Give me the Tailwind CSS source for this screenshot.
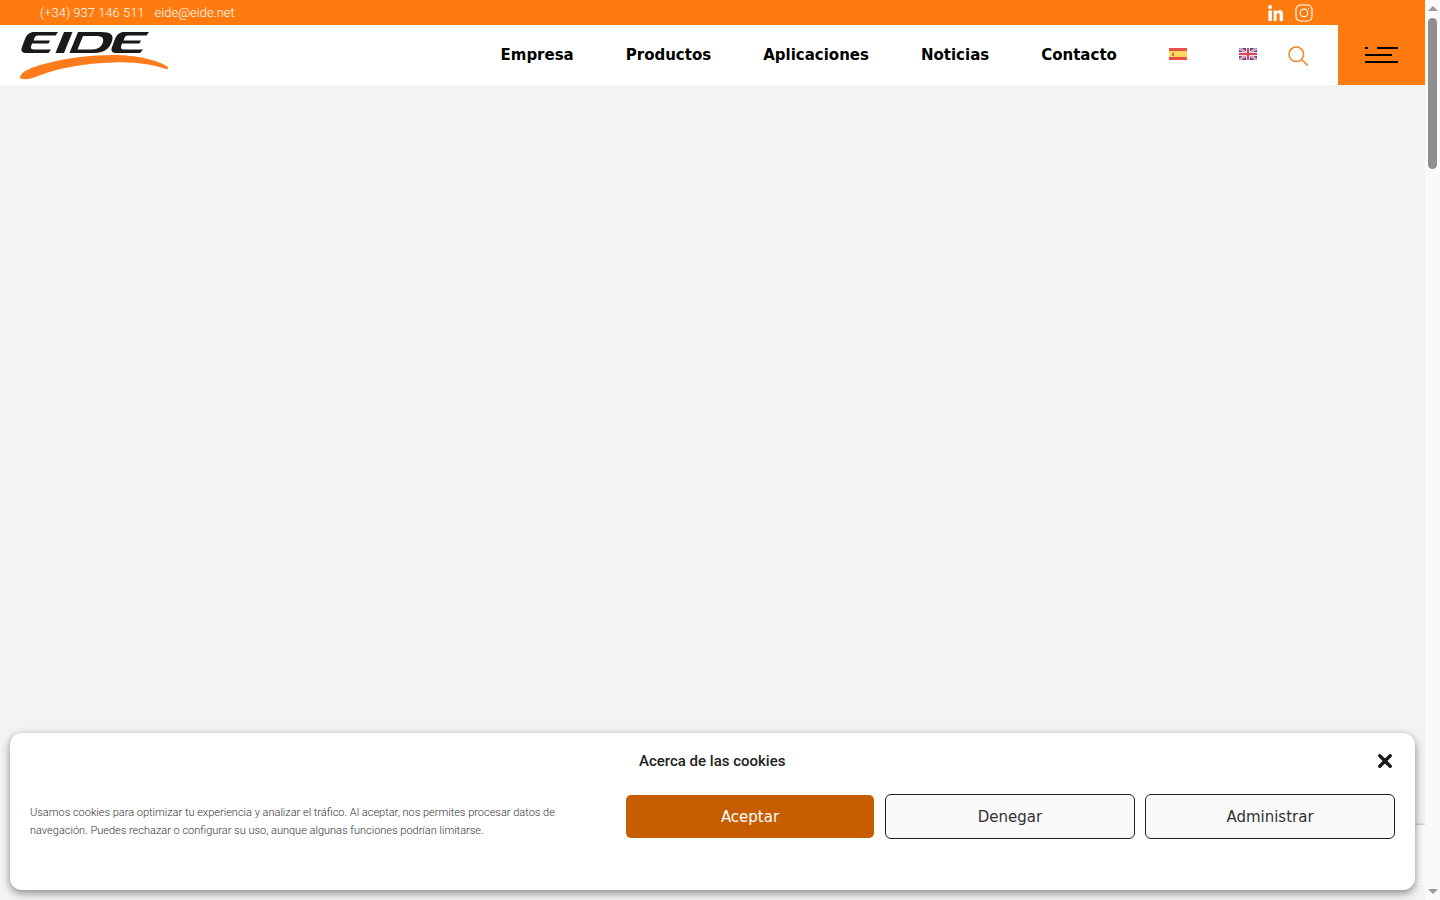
<!DOCTYPE html>
<html lang="es">
<head>
  <meta charset="UTF-8" />
  <meta name="viewport" content="width=device-width, initial-scale=1.0"/>
  <title>EIDE</title>
  <script src="https://cdn.jsdelivr.net/npm/@tailwindcss/browser@4"></script>
</head>
<body class="overflow-hidden">
  <div class="relative flex h-[900px] w-[1440px] overflow-hidden">
    <div class="flex w-[1425px] flex-col bg-[#f1f3f5]">
      <!-- top bar -->
      <div class="flex h-[25px] items-center justify-between bg-[#ff7b10] pl-10 pr-[112px] font-['Roboto',sans-serif] text-[13px] font-light text-[#fff]">
        <div class="flex gap-[10px]">
          <span>(+34) 937 146 511</span>
          <span>eide@eide.net</span>
        </div>
        <div class="flex items-center gap-3">
          <svg class="h-4 w-[15px]" viewBox="0 0 17 17" preserveAspectRatio="none" fill="#fff"><circle cx="2.400" cy="2.300" r="2.200"/><rect x="0.400" y="5.800" width="4" height="11.200"/><path d="M6.400 5.800h3.600v1.600c.6-1 1.900-1.900 3.500-1.900 3 0 3.500 2 3.500 4.700V17h-3.800v-5.900c0-1.500-.3-2.600-1.500-2.600-1.400 0-2 1.100-2 2.700V17H6.400z"/></svg>
          <svg class="h-[18px] w-[18px]" viewBox="0 0 18 18" fill="none" stroke="#fff" stroke-width="1.200"><rect x="1" y="1" width="16" height="16" rx="4.500"/><circle cx="9" cy="9" r="3.800"/><circle cx="13.500" cy="4.500" r="0.700" fill="#fff" stroke="none"/></svg>
        </div>
      </div>
      <!-- header -->
      <header class="flex h-[60px] items-center bg-white">
        <svg class="ml-5 h-[54px] w-[150px] shrink-0" viewBox="0 0 150 54">
          <path fill="#1a1a1a" d="M14 4h24l-2.500 3.500H18c-2 0-3 1-3.500 2.500L13.500 12.500H30l-1.500 3H12l-1 3c-.5 2 .5 3 3 3h17L28.500 25H7c-5 0-6.500-2-5-6l3-8c2-5 5-7 9-7z"/>
          <path fill="#1a1a1a" d="M44 4h8.500L44 25h-8.500z"/>
          <path fill="#1a1a1a" d="M58 4h23c10 0 13 3 11 9-2.500 8-8 12-18 12H49.500zM63 8l-5.500 13.500H72c6 0 10-3 11-7.500 1-4-1-6-7-6z"/>
          <path fill="#1a1a1a" d="M104 4h25l-2.500 3.500H108c-2 0-3 1-3.500 2.500l-1 2.500H121l-1.500 3H102l-1 3c-.5 2 .5 3 3 3h19l-3 3.500H97c-5 0-6.500-2-5-6l3-8c2-5 5-7 9-7z"/>
          <path fill="#ff7b1c" d="M0 49c1-5 9-9 24-13 22-6 46-9 70-9 22 0 44 5 54 12l-.5 2.500c-14-5-33-8-54-7-29 1-54 5-74 13-7 3-15 5-19 3-.5-.3-.5-1-.5-1.500z"/>
        </svg>
        <nav class="ml-[330.500px] flex items-center gap-[52px] font-['DejaVu_Sans',sans-serif] text-[15px] font-bold text-black">
          <a href="#">Empresa</a>
          <a href="#">Productos</a>
          <a href="#">Aplicaciones</a>
          <a href="#">Noticias</a>
          <a href="#">Contacto</a>
        </nav>
        <div class="mb-[2px] ml-[52px] flex h-3 w-[18px] shrink-0 flex-col">
          <div class="h-[3px] bg-[#e8504a]"></div>
          <div class="flex h-[6px] items-center bg-[#fbd75b] pl-[3px]"><span class="h-[3px] w-[2px] bg-[#c8703c]"></span></div>
          <div class="h-[3px] bg-[#e8504a]"></div>
        </div>
        <svg class="mb-[2px] ml-[52px] h-3 w-[18px] shrink-0" viewBox="0 0 18 12">
          <rect width="18" height="12" fill="#3f4f9c"/>
          <path d="M0 0l18 12M18 0L0 12" stroke="#f3dfe4" stroke-width="2.400"/>
          <path d="M0 0l18 12M18 0L0 12" stroke="#d9485f" stroke-width="0.800"/>
          <path d="M9 0v12M0 6h18" stroke="#f3dfe4" stroke-width="4"/>
          <path d="M9 0v12M0 6h18" stroke="#d9485f" stroke-width="2.200"/>
        </svg>
        <svg class="mt-[2px] ml-[31px] h-5 w-5 shrink-0" viewBox="0 0 20 20" fill="none" stroke="#f5801e" stroke-width="1.500" stroke-linecap="round"><circle cx="8.300" cy="8.300" r="7.300"/><path d="M13.500 13.500L20 19.800"/></svg>
        <div class="ml-auto flex h-[60px] w-[87px] shrink-0 flex-col justify-center gap-[5px] bg-[#ff7b10] pl-[27px]">
          <div class="flex h-[2px] w-[33px] justify-between"><span class="h-[2px] w-[3px] bg-black"></span><span class="h-[2px] w-[21px] bg-black"></span></div>
          <div class="h-[2px] w-[27px] bg-black"></div>
          <div class="h-[2px] w-[33px] bg-black"></div>
        </div>
      </header>
      <main class="flex-1"></main>
    </div>

    <!-- recaptcha badge, mostly covered by the banner -->
    <div class="absolute top-[825px] left-[1370px] h-[60px] w-[55px] bg-[#f9f9f9] shadow-[0_-1px_2px_rgba(0,0,0,0.2)]"></div>

    <!-- page scrollbar -->
    <div class="relative flex w-[15px] flex-col items-center bg-[#fafafa]">
      <div class="mt-[6px] h-0 w-0 border-x-[5px] border-b-[5px] border-x-transparent border-b-[#9a9a9a]"></div>
      <div class="mt-[7px] h-[151px] w-[9px] rounded-full bg-[#8f8f8f]"></div>
      <div class="mt-auto mb-[6px] h-0 w-0 border-x-[5px] border-t-[5px] border-x-transparent border-t-[#9a9a9a]"></div>
    </div>

    <!-- cookie banner -->
    <div class="absolute top-[733px] left-[10px] grid h-[157px] w-[1405px] grid-cols-[616px_1fr] rounded-xl bg-white shadow-[0_3px_9px_rgba(0,0,0,0.45)]">
      <div class="flex items-center pt-[21px] pl-5 font-['Roboto',sans-serif] text-[11px] leading-[18px] font-light text-[#333]">
        <p class="w-[540px]">Usamos cookies para optimizar tu experiencia y analizar el tráfico. Al aceptar, nos permites procesar datos de navegación. Puedes rechazar o configurar su uso, aunque algunas funciones podrían limitarse.</p>
      </div>
      <div class="flex flex-col pr-5">
        <div class="flex h-[61px] items-start justify-between pt-[19px] pr-[3px] pl-[13px]">
          <span class="font-['Roboto',sans-serif] text-[15px] leading-[18px] font-medium text-[#222]">Acerca de las cookies</span>
          <svg class="mt-[2px] h-[14px] w-[14px]" viewBox="0 0 14 14" stroke="#1a1a1a" stroke-width="3.400" stroke-linecap="round"><path d="M1.800 1.800l10.400 10.400M12.200 1.800L1.800 12.200"/></svg>
        </div>
        <div class="flex items-center gap-[11px] font-['DejaVu_Sans',sans-serif] text-[15px]">
          <button class="h-[43px] w-[248px] rounded-[5px] bg-[#c65d00] pt-px text-[#fff]">Aceptar</button>
          <button class="h-[45px] w-[250px] rounded-[6px] border border-[#222] bg-[#f9f9f9] pt-px text-[#333]">Denegar</button>
          <button class="-ml-px h-[45px] w-[250px] rounded-[6px] border border-[#222] bg-[#f9f9f9] pt-px text-[#333]">Administrar</button>
        </div>
      </div>
    </div>
  </div>
</body>
</html>
